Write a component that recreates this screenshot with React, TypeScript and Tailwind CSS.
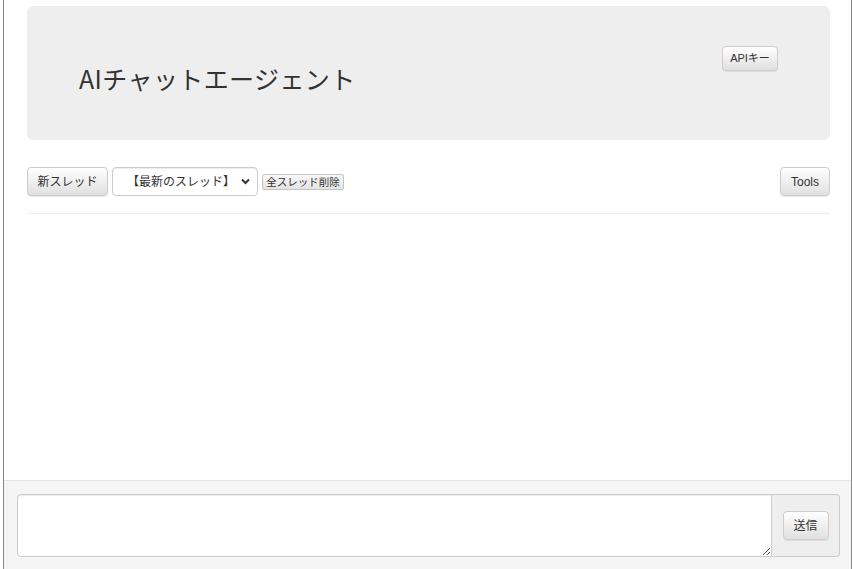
import { useState } from "react";

const btn =
  "rounded-[4px] border border-[#ccc] bg-gradient-to-b from-white to-[#e0e0e0] text-[#333] shadow-[0_1px_1px_rgba(0,0,0,0.075)]";

export default function App() {
  const [thread, setThread] = useState("latest");
  const [msg, setMsg] = useState("");

  return (
    <div
      className="h-[569px] bg-white pl-[3px] pr-[1px]"
      style={{ fontFamily: '"Liberation Sans", "Noto Sans CJK JP", sans-serif' }}
    >
      <div className="flex h-full flex-col border-x border-[#8a8a8a]">
        <div className="flex-1 pl-[23px] pr-[21px] pt-[6px]">
          {/* header */}
          <div className="flex h-[134px] items-start justify-between rounded-[6px] bg-[#eee] px-[52px]">
            <h1
              className="mt-[58px] text-[25px] leading-[28px] tracking-[0.4px] text-[#333]"
              style={{ fontFamily: '"Noto Sans CJK JP", "Noto Sans", sans-serif' }}
            >
              AIチャットエージェント
            </h1>
            <button className={`${btn} mt-[40px] h-[25px] w-[56px] rounded-[3px] text-[11px]`}>
              APIキー
            </button>
          </div>

          {/* thread toolbar */}
          <div className="mt-[27px] flex items-center gap-[4px]">
            <button className={`${btn} h-[29px] w-[81px] text-[12px]`}>新スレッド</button>
            <div className="relative h-[29px] w-[146px]">
              <select
                value={thread}
                onChange={(e) => setThread(e.target.value)}
                className="h-full w-full appearance-none rounded-[4px] border border-[#ccc] bg-white pl-[14px] pr-[20px] text-[12px] text-[#333] shadow-[inset_0_1px_1px_rgba(0,0,0,0.075)]"
              >
                <option value="latest">【最新のスレッド】</option>
              </select>
              <svg
                className="pointer-events-none absolute right-[8px] top-[11px]"
                width="9"
                height="7"
                viewBox="0 0 9 7"
              >
                <path d="M1 1.5l3.5 3.5 3.5-3.5" fill="none" stroke="#333" strokeWidth="2" />
              </svg>
            </div>
            <button className="h-[16px] w-[82px] rounded-[2px] border border-[#c4c4c4] bg-gradient-to-b from-[#f8f8f8] to-[#e4e4e4] px-[2px] text-[10.5px] leading-[14px] text-[#333]">
              全スレッド削除
            </button>
            <div className="flex-1" />
            <button className={`${btn} h-[29px] w-[50px] text-[12px]`}>Tools</button>
          </div>

          <hr className="mt-[17px] border-t border-[#eee]" />
        </div>

        {/* message input */}
        <div className="border-t border-[#e3e3e3] bg-[#f5f5f5] pb-[12px] pl-[13px] pr-[11px] pt-[13px]">
          <div className="flex h-[63px]">
            <textarea
              value={msg}
              onChange={(e) => setMsg(e.target.value)}
              className="h-full flex-1 rounded-l-[4px] border border-[#ccc] bg-white px-2 py-1 text-[13px] outline-none shadow-[inset_0_1px_1px_rgba(0,0,0,0.075)]"
            />
            <div className="flex w-[68px] items-center justify-center rounded-r-[4px] border border-l-0 border-[#ccc] bg-[#eee]">
              <button className={`${btn} h-[29px] w-[46px] text-[12px]`}>送信</button>
            </div>
          </div>
        </div>
      </div>
    </div>
  );
}
